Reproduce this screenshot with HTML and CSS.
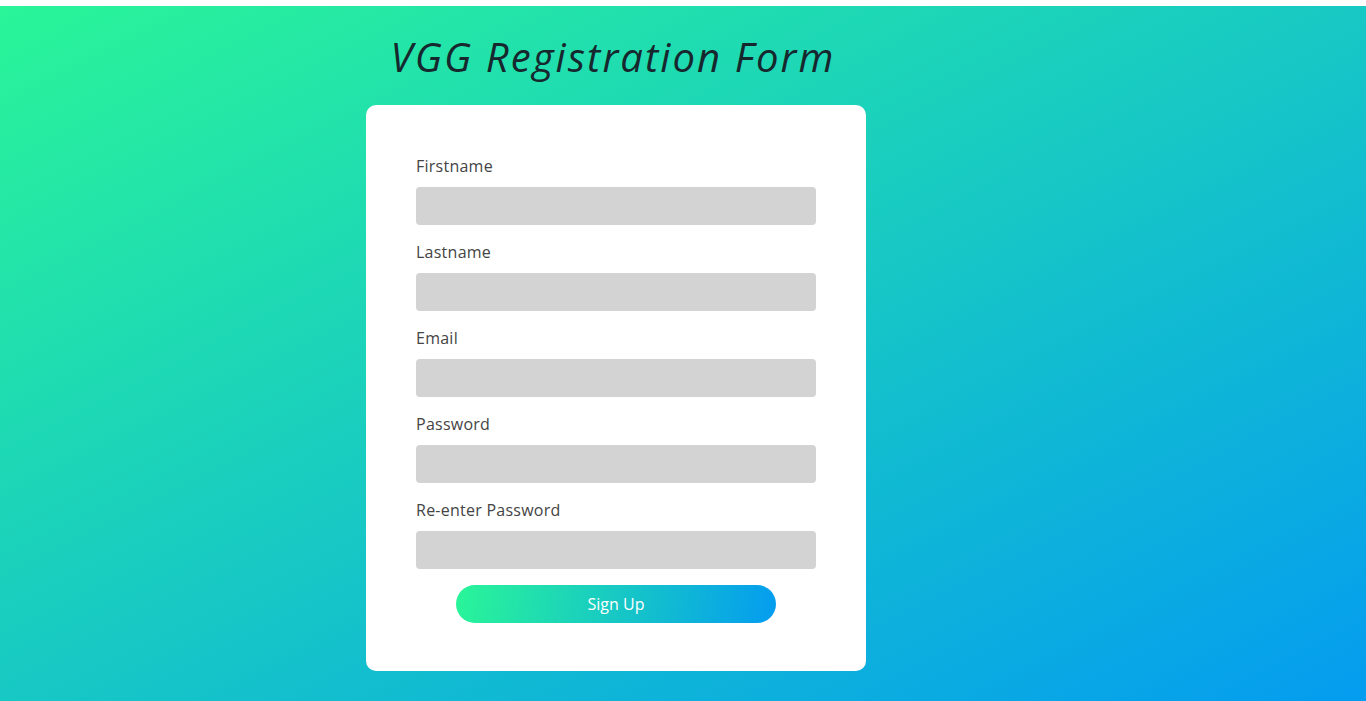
FILE: index.html
```html
<!DOCTYPE html>
<html>
<head>
<meta charset="utf-8">
<title>VGG Registration Form</title>
<link rel="stylesheet" href="styles.css">
</head>
<body>
<main class="page">
  <div class="column">
    <h1 class="title">VGG Registration Form</h1>
    <form class="card">
      <div class="field">
        <label class="label">Firstname</label>
        <input class="input" type="text">
      </div>
      <div class="field">
        <label class="label">Lastname</label>
        <input class="input" type="text">
      </div>
      <div class="field">
        <label class="label">Email</label>
        <input class="input" type="email">
      </div>
      <div class="field">
        <label class="label">Password</label>
        <input class="input" type="password">
      </div>
      <div class="field">
        <label class="label">Re-enter Password</label>
        <input class="input" type="password">
      </div>
      <button class="btn" type="button">Sign Up</button>
    </form>
  </div>
</main>
</body>
</html>
```
FILE: styles.css
```css
html, body {
  margin: 0;
  padding: 0;
  background: #fff;
  font-family: "Open Sans", "Noto Sans", sans-serif;
}
body {
  padding-top: 6px;
}
.page {
  min-height: 695px;
  background: linear-gradient(to bottom right, #2af598, #049cf0);
  display: flex;
}
.column {
  margin-left: 366px;
  width: 500px;
  display: flex;
  flex-direction: column;
}
.title {
  margin: 27px 0 0 -6px;
  height: 72px;
  line-height: 48px;
  font-size: 40px;
  font-style: italic;
  font-weight: 400;
  color: #16282e;
  text-align: center;
  letter-spacing: 2.1px;
}
.card {
  background: #fff;
  border-radius: 10px;
  padding: 50px 50px 48px;
  display: flex;
  flex-direction: column;
  gap: 16px;
}
.field {
  display: flex;
  flex-direction: column;
  gap: 10px;
}
.label {
  font-size: 16px;
  line-height: 22px;
  color: #444;
  letter-spacing: 0.25px;
}
.input {
  height: 38px;
  border: none;
  border-radius: 4px;
  background: #d3d3d3;
  box-sizing: border-box;
  margin: 0;
  padding: 0 10px;
}
.btn {
  align-self: center;
  width: 320px;
  height: 38px;
  border: none;
  border-radius: 19px;
  background: linear-gradient(100deg, #2af598, #049cf0);
  color: #fff;
  font-family: inherit;
  font-size: 16px;
  margin: 0;
}
```
